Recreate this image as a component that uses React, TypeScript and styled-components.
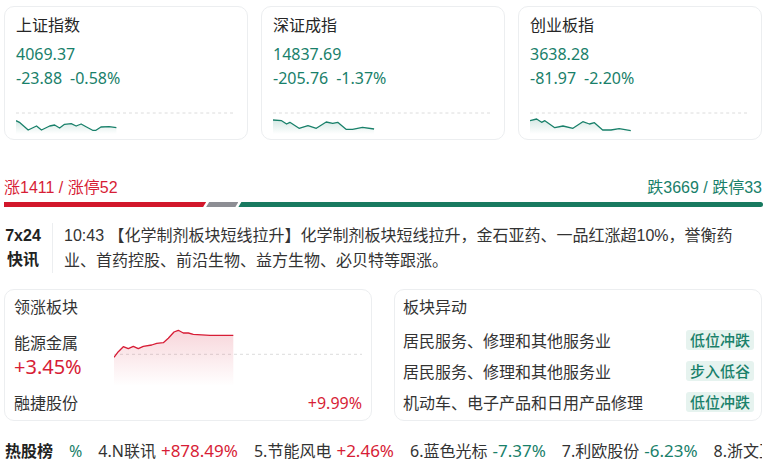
import * as React from 'react';
import styled, { createGlobalStyle } from 'styled-components';

const UP = '#d71d36';
const DOWN = '#19806a';

const GlobalStyle = createGlobalStyle`
  html, body {
    margin: 0;
    background: #fff;
    overflow: hidden;
  }
  body {
    font-family: "Noto Sans", "Noto Sans CJK SC", sans-serif;
    color: #333;
  }
`;

const Page = styled.div`
  width: 766px;
  padding: 6px 4px 0;
  box-sizing: border-box;
`;

const IndexGrid = styled.div`
  display: grid;
  grid-template-columns: repeat(3, 1fr);
  gap: 13px;
`;

const IndexCard = styled.div`
  border: 1px solid #eceef0;
  border-radius: 10px;
  padding: 5px 11px 5px;
`;

const CardTitle = styled.div`
  font-size: 16px;
  line-height: 26px;
  color: #262626;
`;

const IndexValue = styled.div`
  margin-top: 4px;
  font-size: 16px;
  line-height: 24px;
  color: ${DOWN};
`;

const IndexChange = styled.div`
  font-size: 16px;
  line-height: 24px;
  color: ${DOWN};

  span + span {
    margin-left: 8px;
  }
`;

const SparkBox = styled.svg`
  display: block;
  margin-top: 20px;
  width: 100%;
  height: 24px;
`;

const StatsRow = styled.div`
  margin-top: 36px;
  display: flex;
  justify-content: space-between;
  font-family: "Liberation Sans", "Noto Sans CJK SC", sans-serif;
  font-size: 16px;
  line-height: 24px;
`;

const StatText = styled.span<{ $color: string }>`
  color: ${(p) => p.$color};
`;

const Bar = styled.div`
  margin-top: 2px;
  margin-right: -1px;
  height: 5px;
  display: flex;
`;

const BarSeg = styled.div<{ $grow: number; $color: string; $pos: 'first' | 'mid' | 'last' }>`
  flex: ${(p) => p.$grow} 1 0;
  background: ${(p) => p.$color};
  margin-left: ${(p) => (p.$pos === 'first' ? 0 : '-1px')};
  border-radius: ${(p) => (p.$pos === 'last' ? '0 3px 3px 0' : 0)};
  clip-path: ${(p) =>
    p.$pos === 'first'
      ? 'polygon(0 0, 100% 0, calc(100% - 3px) 100%, 0 100%)'
      : p.$pos === 'mid'
      ? 'polygon(4px 0, 100% 0, calc(100% - 3px) 100%, 1px 100%)'
      : 'polygon(4px 0, 100% 0, 100% 100%, 1px 100%)'};
`;

const News = styled.div`
  margin-top: 16px;
  display: flex;
  align-items: stretch;
`;

const NewsLabel = styled.div`
  width: 38px;
  padding: 1px 10px 0 0;
  border-right: 1px solid #eceef0;
  font-family: "Liberation Sans", "Noto Sans CJK SC", sans-serif;
  font-weight: 700;
  font-size: 16px;
  line-height: 24px;
  text-align: center;
  color: #222;
`;

const NewsText = styled.div`
  flex: 1;
  padding: 0 18px 0 11px;
  font-family: "Liberation Sans", "Noto Sans CJK SC", sans-serif;
  font-size: 16px;
  line-height: 25px;
  color: #333;
`;

const LowerGrid = styled.div`
  margin-top: 16px;
  display: grid;
  grid-template-columns: 1fr 1fr;
  gap: 22px;
`;

const Panel = styled.div`
  border: 1px solid #eceef0;
  border-radius: 10px;
  padding: 5px 9px 5px;
`;

const PanelTitle = styled.div`
  font-size: 16px;
  line-height: 24px;
  color: #333;
`;

const LeadRow = styled.div`
  margin-top: 7px;
  height: 60px;
  display: flex;
`;

const LeadInfo = styled.div`
  width: 100px;
  padding-top: 5px;
`;

const LeadName = styled.div`
  font-size: 16px;
  line-height: 24px;
  color: #333;
`;

const LeadPct = styled.div`
  font-size: 20px;
  line-height: 24px;
  color: ${UP};
`;

const LeadChart = styled.svg`
  flex: 1;
  height: 60px;
  display: block;
`;

const StockRow = styled.div`
  margin-top: 5px;
  display: flex;
  justify-content: space-between;
  font-size: 16px;
  line-height: 24px;
`;

const StockPct = styled.span`
  color: ${UP};
`;

const MovePanel = styled(Panel)`
  padding: 5px 7px 3px 8px;
`;

const MoveList = styled.div`
  margin-top: 5px;
`;

const MoveRow = styled.div`
  height: 31px;
  display: flex;
  align-items: center;
  justify-content: space-between;
  font-size: 16px;
  color: #333;
`;

const Tag = styled.span`
  padding: 0 4px;
  line-height: 20px;
  font-size: 15px;
  font-weight: 500;
  color: ${DOWN};
  background: #e6f3ef;
  border-radius: 3px;
`;

const HotRow = styled.div`
  margin-top: 17px;
  display: flex;
  align-items: center;
  gap: 16px;
  white-space: nowrap;
  overflow: hidden;
  line-height: 26px;
`;

const HotTitle = styled.span`
  font-size: 16px;
  font-weight: 700;
  color: #222;
  margin-left: 1px;
`;

const HotUnit = styled.span`
  font-size: 16px;
  color: ${DOWN};
`;

const HotItem = styled.span`
  font-size: 16px;
  color: #333;
`;

const HotPct = styled.span<{ $up: boolean }>`
  margin-left: 5px;
  font-size: 17px;
  color: ${(p) => (p.$up ? UP : DOWN)};
`;

type Pt = [number, number];

function Spark({ id, points, w, h, base, color, as: Box }: {
  id: string;
  points: Pt[];
  w: number;
  h: number;
  base: number;
  color: string;
  as: typeof SparkBox | typeof LeadChart;
}) {
  const line = points.map(([x, y]) => `${x},${y}`).join(' ');
  const first = points[0][0];
  const last = points[points.length - 1][0];
  const area = `${first},${h} ${line} ${last},${h}`;
  return (
    <Box viewBox={`0 0 ${w} ${h}`} preserveAspectRatio="none">
      <defs>
        <linearGradient id={id} x1="0" y1="0" x2="0" y2="1">
          <stop offset="0" stopColor={color} stopOpacity="0.18" />
          <stop offset="1" stopColor={color} stopOpacity="0" />
        </linearGradient>
      </defs>
      <line x1="0" x2={w} y1={base} y2={base} stroke="#dcdcdc" strokeWidth="1" strokeDasharray="3 3" />
      <polygon points={area} fill={`url(#${id})`} />
      <polyline points={line} fill="none" stroke={color} strokeWidth="1.3" strokeLinejoin="round" />
    </Box>
  );
}

const indices = [
  {
    name: '上证指数', value: '4069.37', change: '-23.88', pct: '-0.58%',
    pts: [[0, 10.7], [4, 12.7], [12.3, 20], [20.7, 16], [25.7, 20], [34, 16], [39, 15], [44, 18], [49, 14.3], [55.7, 13.7], [60.7, 16], [65.7, 14], [70.7, 16.7], [77.3, 20.3], [80.7, 20.3], [85.7, 17], [94, 16.7], [101.3, 17.7]] as Pt[],
  },
  {
    name: '深证成指', value: '14837.69', change: '-205.76', pct: '-1.37%',
    pts: [[0, 10], [8.7, 10.7], [13.7, 14], [17, 12.3], [26.3, 18.3], [35.3, 15.7], [43.7, 18.3], [53.7, 12], [60.3, 13.3], [65.3, 12.3], [73.7, 19.3], [80.3, 19.3], [90.3, 17.3], [102, 19]] as Pt[],
  },
  {
    name: '创业板指', value: '3638.28', change: '-81.97', pct: '-2.20%',
    pts: [[0, 10.7], [6.7, 9], [11.7, 12.3], [15, 10.7], [25, 17.7], [33.3, 16], [43.3, 18.3], [53.3, 11.7], [60, 14], [65, 12.7], [73.3, 20], [81.7, 20], [90, 18.7], [101.7, 20.7]] as Pt[],
  },
];

const leadPts: Pt[] = [[0, 31.3], [4.3, 25.7], [9.3, 20.7], [14.3, 22.7], [19.3, 20.3], [24.3, 22.7], [29.3, 20.3], [37.7, 19], [42.7, 17.3], [49.3, 16.7], [54.3, 12.3], [60, 6], [64.3, 4.3], [69.3, 7], [74.3, 7], [79.3, 8.3], [96, 9.3], [119.3, 9.3]];

const moves = [
  { name: '居民服务、修理和其他服务业', tag: '低位冲跌' },
  { name: '居民服务、修理和其他服务业', tag: '步入低谷' },
  { name: '机动车、电子产品和日用产品修理', tag: '低位冲跌' },
];

const hot = [
  { name: '4.N联讯', pct: '+878.49%', up: true },
  { name: '5.节能风电', pct: '+2.46%', up: true },
  { name: '6.蓝色光标', pct: '-7.37%', up: false },
  { name: '7.利欧股份', pct: '-6.23%', up: false },
  { name: '8.浙文互联', pct: '-5.08%', up: false },
];

export default function App() {
  return (
    <>
      <GlobalStyle />
      <Page>
        <IndexGrid>
          {indices.map((it, i) => (
            <IndexCard key={it.name}>
              <CardTitle>{it.name}</CardTitle>
              <IndexValue>{it.value}</IndexValue>
              <IndexChange>
                <span>{it.change}</span>
                <span>{it.pct}</span>
              </IndexChange>
              <Spark id={`g${i}`} as={SparkBox} points={it.pts} w={222} h={24} base={3} color={DOWN} />
            </IndexCard>
          ))}
        </IndexGrid>

        <StatsRow>
          <StatText $color={UP}>涨1411 / 涨停52</StatText>
          <StatText $color={DOWN}>跌3669 / 跌停33</StatText>
        </StatsRow>
        <Bar>
          <BarSeg $grow={1411} $color="#d2172b" $pos="first" />
          <BarSeg $grow={232} $color="#8d8e94" $pos="mid" />
          <BarSeg $grow={3669} $color="#187a60" $pos="last" />
        </Bar>

        <News>
          <NewsLabel>
            7x24
            <br />
            快讯
          </NewsLabel>
          <NewsText>
            10:43 【化学制剂板块短线拉升】化学制剂板块短线拉升，金石亚药、一品红涨超10%，誉衡药业、首药控股、前沿生物、益方生物、必贝特等跟涨。
          </NewsText>
        </News>

        <LowerGrid>
          <Panel>
            <PanelTitle>领涨板块</PanelTitle>
            <LeadRow>
              <LeadInfo>
                <LeadName>能源金属</LeadName>
                <LeadPct>+3.45%</LeadPct>
              </LeadInfo>
              <Spark id="lead" as={LeadChart} points={leadPts} w={248} h={60} base={28.3} color={UP} />
            </LeadRow>
            <StockRow>
              <span>融捷股份</span>
              <StockPct>+9.99%</StockPct>
            </StockRow>
          </Panel>

          <MovePanel>
            <PanelTitle>板块异动</PanelTitle>
            <MoveList>
              {moves.map((m, i) => (
                <MoveRow key={i}>
                  <span>{m.name}</span>
                  <Tag>{m.tag}</Tag>
                </MoveRow>
              ))}
            </MoveList>
          </MovePanel>
        </LowerGrid>

        <HotRow>
          <HotTitle>热股榜</HotTitle>
          <HotUnit>%</HotUnit>
          {hot.map((h) => (
            <HotItem key={h.name}>
              {h.name}
              <HotPct $up={h.up}>{h.pct}</HotPct>
            </HotItem>
          ))}
        </HotRow>
      </Page>
    </>
  );
}
